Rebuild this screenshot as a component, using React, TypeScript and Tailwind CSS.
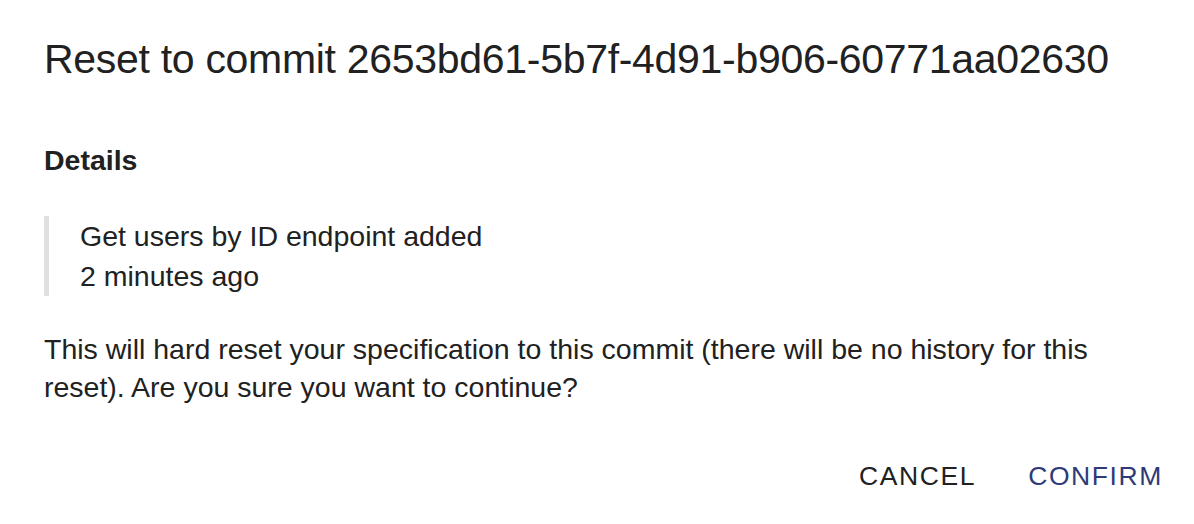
export default function App() {
  return (
    <div className="min-h-screen bg-white text-[#212121] font-['Liberation_Sans',Arial,sans-serif]">
      <div className="pl-[44px] pr-[31px] pt-[35px]">
        <h2 className="text-[41px] leading-[48px] tracking-[-0.3px] font-normal">
          Reset to commit 2653bd61-5b7f-4d91-b906-60771aa02630
        </h2>

        <h3 className="mt-[59px] text-[28.5px] leading-[36px] font-bold">Details</h3>

        <blockquote className="mt-[38px] border-l-[5px] border-[#e0e0e0] pl-[31px] text-[28.5px] leading-[40px]">
          <div>Get users by ID endpoint added</div>
          <div>2 minutes ago</div>
        </blockquote>

        <p className="mt-[34px] mr-[30px] text-[28.5px] leading-[38px]">
          This will hard reset your specification to this commit (there will be no history for this
          reset). Are you sure you want to continue?
        </p>

        <div className="mt-[55px] flex justify-end gap-[52px]">
          <button className="text-[26.5px] leading-[30px] tracking-[1.6px] text-[#212121]">CANCEL</button>
          <button className="text-[26.5px] leading-[30px] tracking-[1.6px] text-[#2f3b78]">CONFIRM</button>
        </div>
      </div>
    </div>
  )
}
